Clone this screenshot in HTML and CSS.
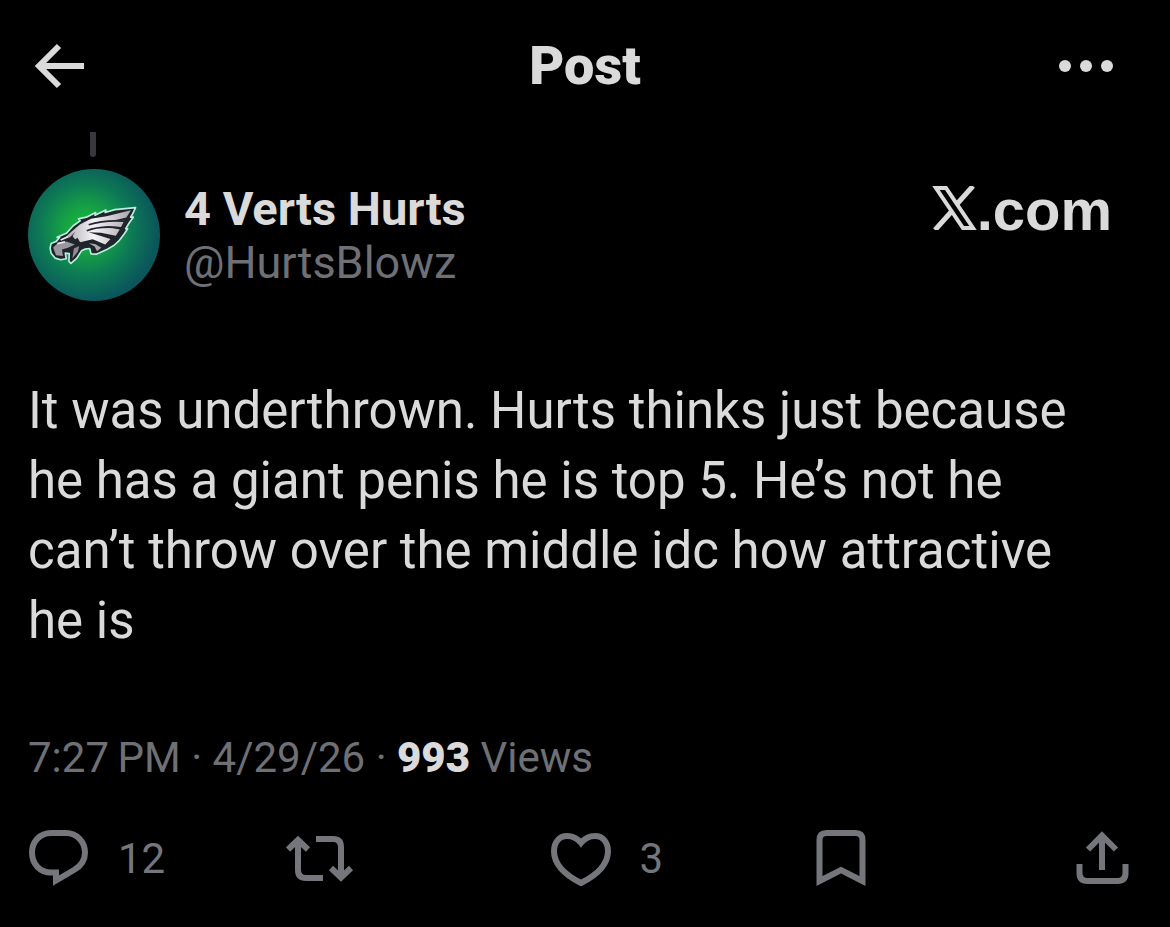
FILE: index.html
```html
<!DOCTYPE html>
<html lang="en">
<head>
    <meta charset="UTF-8">
    <meta name="viewport" content="width=device-width, initial-scale=1.0">
    <title>Post</title>
    <link rel="stylesheet" href="styles.css">
</head>
<body>

    <!-- Top bar -->
    <header class="top-bar">
        <button class="icon-btn" aria-label="Back">
            <svg width="50" height="46" viewBox="0 0 50 46" fill="none" stroke="currentColor" stroke-width="6">
                <path d="M24 3L4 23L24 43M5 23H49"/>
            </svg>
        </button>
        <h1>Post</h1>
        <button class="icon-btn more-btn" aria-label="More">
            <svg width="54" height="12" viewBox="0 0 54 12" fill="currentColor">
                <circle cx="6" cy="6" r="6"/>
                <circle cx="27" cy="6" r="6"/>
                <circle cx="48" cy="6" r="6"/>
            </svg>
        </button>
    </header>

    <main class="post">
        <div class="thread-line"></div>

        <!-- Author -->
        <div class="author">
            <svg class="avatar" viewBox="0 0 400 400" role="img" aria-label="Avatar">
                <defs>
                    <radialGradient id="glow" cx="44%" cy="46%" r="54%">
                        <stop offset="0" stop-color="#18bd35"/>
                        <stop offset="0.3" stop-color="#16a443"/>
                        <stop offset="0.65" stop-color="#0d7955"/>
                        <stop offset="1" stop-color="#0b565b"/>
                    </radialGradient>
                    <linearGradient id="feather" x1="0" y1="0" x2="1" y2="0">
                        <stop offset="0" stop-color="#aaa8ad"/>
                        <stop offset="0.45" stop-color="#f4f2f5"/>
                        <stop offset="1" stop-color="#aaa5ac"/>
                    </linearGradient>
                </defs>
                <circle cx="200" cy="200" r="200" fill="url(#glow)"/>
                <path fill="#20242b" stroke="#b9eee0" stroke-width="5" stroke-linejoin="round" d="M67 240L70 226L85 220L96 207L88 207L116 195L137 172L158 157L153 151L180 145L205 132L203 140L236 124L234 132L263 123L326 117L317 136L311 146L319 146L307 163L296 181L302 181L292 196L277 216L261 231L237 245L207 258L191 257L187 241L172 243L162 248L148 270L130 286L124 280L125 256L113 255L116 272L99 275L82 270L70 255Z"/>
                <path fill="url(#feather)" d="M108 211L135 187L157 168L191 151L238 143L312 125L298 147L256 157L292 156L282 176L228 173L278 183L266 202L221 193L184 192L250 212L234 229L196 213L158 222L150 208L142 214L135 203L143 190L127 207Z"/>
                <path fill="#9a979f" d="M76 238L89 226L116 220L142 229L121 239L103 244L106 264L85 261Z"/>
                <path fill="#8e8b93" d="M139 241L155 233L151 251L134 271L137 254Z"/>
                <path fill="#aaa7ad" d="M183 224L205 228L222 239L209 249L202 235Z"/>
                <path fill="none" stroke="#20242b" stroke-width="5" d="M184 169Q230 154 291 158M178 187Q220 171 284 179M112 216L137 211L147 222L168 228L200 219"/>
                <path fill="none" stroke="#e8e7eb" stroke-width="5" d="M99 215L121 205M89 226L112 221"/>
            </svg>
            <div class="names">
                <a href="#" class="name">4 Verts Hurts</a>
                <a href="#" class="handle">@HurtsBlowz</a>
            </div>
            <div class="brand">
                <svg width="45" height="44" viewBox="0 0 45 44" fill="none" stroke="currentColor" stroke-width="4" aria-label="X">
                    <path d="M4 2H14L41 42H31Z"/>
                    <path stroke-width="5" d="M41 0L25 18M3 44L20 25"/>
                </svg>
                <span>.com</span>
            </div>
        </div>

        <p class="post-text">It was underthrown. Hurts thinks just because he has a giant penis he is top 5. He’s not he can’t throw over the middle idc how attractive he is</p>

        <p class="meta">7:27&thinsp;PM · 4/29/26 · <strong>993</strong> Views</p>

        <!-- Actions -->
        <div class="actions">
            <button class="action" aria-label="Reply">
                <svg viewBox="0 0 70 70">
                    <path d="M27 10H42C53 10 61 19 61 29.5C61 37 57 43 50 47L32 57.5V49.5H27C16 49.5 8 41 8 29.5C8 18.5 16 10 27 10Z"/>
                </svg>
                <span>12</span>
            </button>
            <button class="action" aria-label="Repost">
                <svg viewBox="0 0 70 70">
                    <path d="M3 26.5L13 17L23 26.5M13 17V47Q13 55 21 55H38M31 16H48Q56 16 56 24V54M46 45L56 54.5L66 45"/>
                </svg>
            </button>
            <button class="action" aria-label="Like">
                <svg viewBox="0 0 70 70">
                    <path d="M35 20C31 15 26 13 21 13C13 13 8 19.5 8 28C8 41 19 52 35 60C51 52 62 41 62 28C62 19.5 57 13 49 13C44 13 39 15 35 20Z"/>
                </svg>
                <span>3</span>
            </button>
            <button class="action" aria-label="Bookmark">
                <svg viewBox="0 0 70 70">
                    <path d="M13.5 58V17Q13.5 10 20.5 10H49.5Q56.5 10 56.5 17V58L35 47Z"/>
                </svg>
            </button>
            <button class="action share" aria-label="Share">
                <svg viewBox="0 0 70 70">
                    <path d="M21 26.5L35 12.5L49 26.5M35 13V47M12.5 41V50Q12.5 58 20.5 58H50.5Q58.5 58 58.5 50V41"/>
                </svg>
            </button>
        </div>
    </main>

</body>
</html>
```
FILE: styles.css
```css
/* General */
* {
    margin: 0;
    padding: 0;
    box-sizing: border-box;
}

body {
    font-family: Roboto, Arial, sans-serif;
    background-color: #000;
    color: #dadada;
}

button {
    background: none;
    border: none;
    color: inherit;
    font: inherit;
    cursor: pointer;
}

a {
    color: inherit;
    text-decoration: none;
}

svg {
    display: block;
    flex-shrink: 0;
}

/* Top bar */
.top-bar {
    display: grid;
    grid-template-columns: 1fr auto 1fr;
    align-items: center;
    height: 132px;
    padding: 0 57px 0 35px;
}

.top-bar h1 {
    font-size: 54px;
    font-weight: 900;
    line-height: 60px;
    padding-left: 22px;
}

.icon-btn {
    justify-self: start;
}

.more-btn {
    justify-self: end;
}

/* Post */
.post {
    padding: 0 28px;
}

.thread-line {
    width: 6px;
    height: 25px;
    margin: 0 0 12px 62px;
    border-radius: 0 0 3px 3px;
    background-color: #37383b;
}

.author {
    display: flex;
    align-items: center;
    padding-right: 30px;
}

.avatar {
    width: 132px;
    height: 132px;
    margin-right: 24px;
}

.names {
    display: flex;
    flex-direction: column;
    padding-top: 2px;
    font-size: 45px;
    line-height: 54px;
}

.name {
    font-size: 47px;
    font-weight: 700;
}

.handle {
    color: #6f7075;
}

.brand {
    display: flex;
    align-items: flex-end;
    align-self: flex-start;
    margin: 17px 0 0 auto;
}

.brand span {
    font-family: "Liberation Sans", Arial, sans-serif;
    font-size: 58px;
    font-weight: 700;
    line-height: 40px;
}

.post-text {
    margin-top: 75px;
    padding-right: 40px;
    font-size: 51px;
    line-height: 70px;
}

.meta {
    margin-top: 76px;
    font-size: 42px;
    line-height: 52px;
    color: #6f7075;
}

.meta strong {
    font-weight: 900;
    color: #dadada;
}

/* Actions */
.actions {
    display: flex;
    margin: 39px 5px 0 -4px;
    color: #74767b;
}

.action {
    display: flex;
    flex: 1;
    align-items: center;
    gap: 24px;
    font-size: 42px;
}

.action.share {
    flex: none;
}

.action svg {
    width: 70px;
    height: 70px;
    fill: none;
    stroke: currentColor;
    stroke-width: 6;
}
```
